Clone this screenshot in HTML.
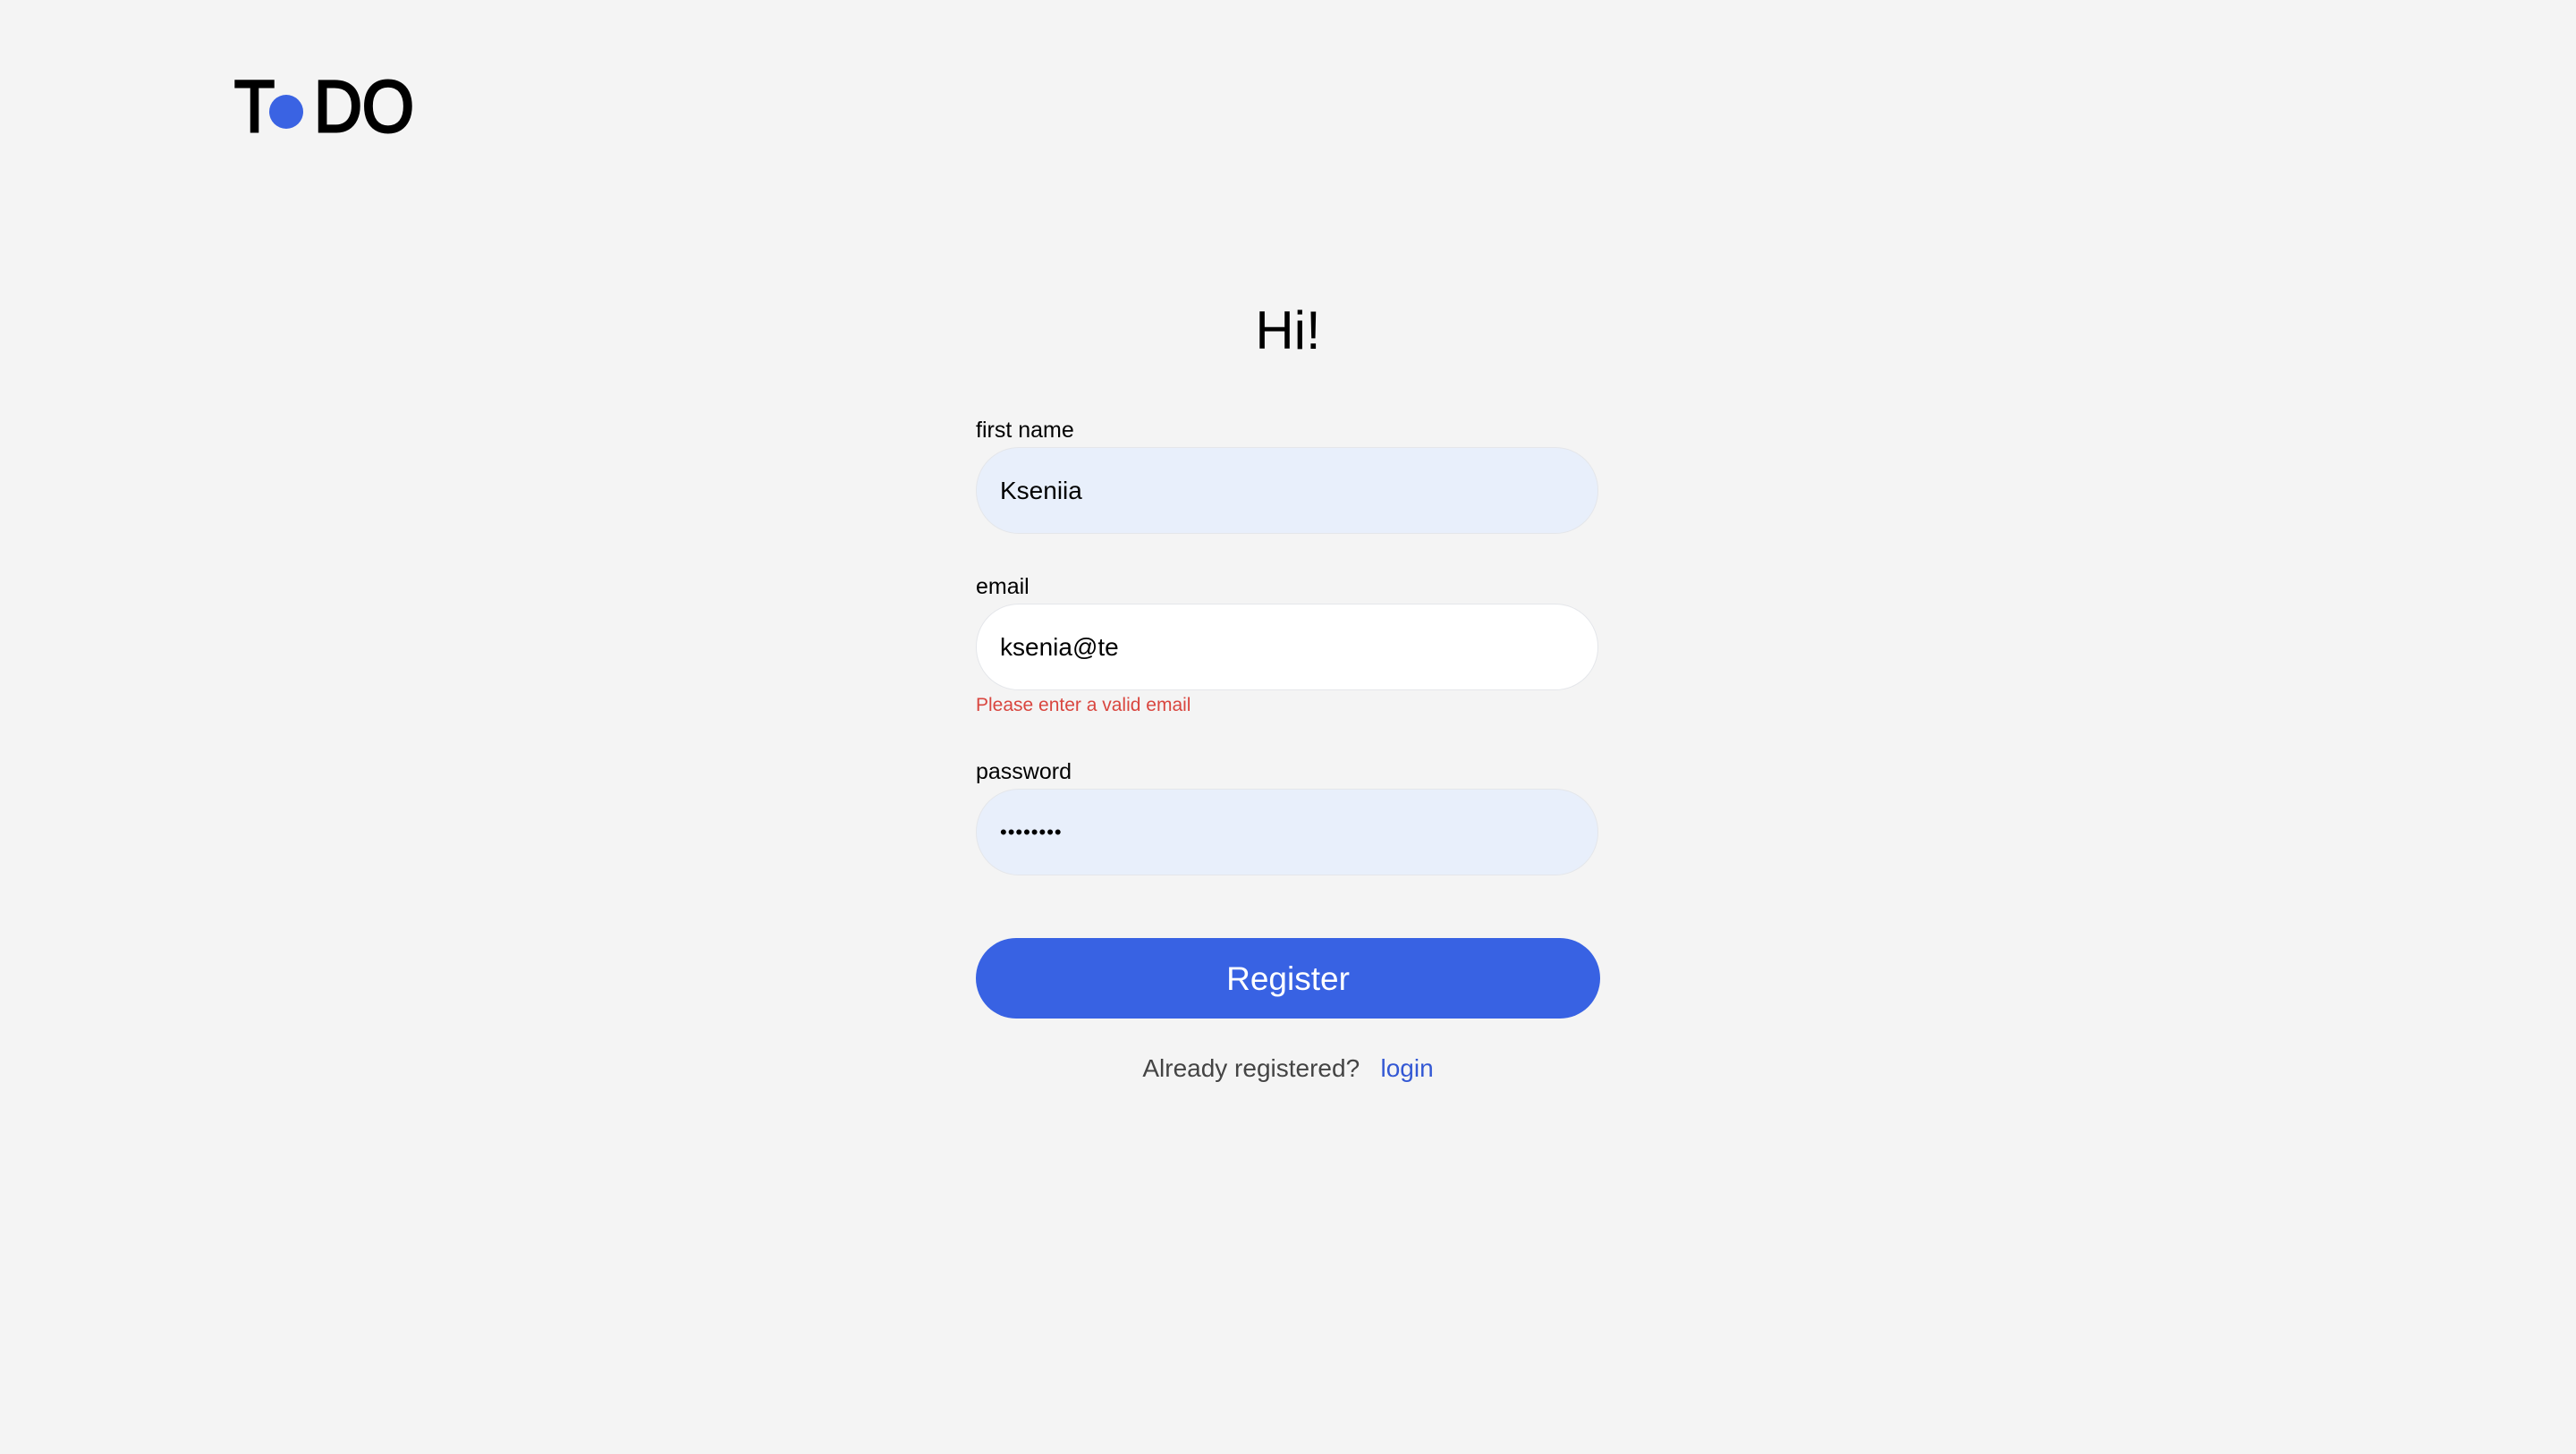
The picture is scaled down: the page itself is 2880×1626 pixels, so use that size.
<!DOCTYPE html>
<html><head><style>
html,body{margin:0;padding:0}
body{width:2880px;height:1626px;background:#f4f4f4;position:relative;overflow:hidden;font-family:"Liberation Sans",sans-serif;color:#000}
.a{position:absolute;white-space:nowrap}
.logo{top:70px;font-size:82px;font-weight:normal;line-height:100px;-webkit-text-stroke:3px #000}
.dot{position:absolute;left:301px;top:106px;width:38px;height:38px;border-radius:50%;background:#3a63e3}
.lbl{left:1091px;font-size:25px;line-height:30px}
.inp{position:absolute;left:1091px;width:694px;height:95px;border:1px solid #e4e6ea;border-radius:48px;box-sizing:content-box}
.inp span{position:absolute;left:26px;top:0;line-height:95px;font-size:28px}
.blue{background:#e8effb}
.white{background:#fff}
</style></head><body>
<div class="a logo" style="left:262px;transform:scaleX(0.9);transform-origin:left">T</div>
<div class="a logo" style="left:351px;transform:scaleX(0.91);transform-origin:left">DO</div>
<div class="dot"></div>
<div class="a" style="left:0;width:2880px;text-align:center;top:332px;font-size:60px;line-height:76px">Hi!</div>

<div class="a lbl" style="top:466px">first name</div>
<div class="inp blue" style="top:500px"><span>Kseniia</span></div>

<div class="a lbl" style="top:641px">email</div>
<div class="inp white" style="top:675px"><span>ksenia@te</span></div>
<div class="a" style="left:1091px;top:776px;font-size:21px;line-height:26px;color:#d9463f">Please enter a valid email</div>

<div class="a lbl" style="top:848px">password</div>
<div class="inp blue" style="top:882px"><span style="font-size:22px;letter-spacing:1px">••••••••</span></div>

<div class="a" style="left:1091px;top:1049px;width:698px;height:90px;border-radius:45px;background:#3862e3;color:#fff;text-align:center;line-height:92px;font-size:37px">Register</div>

<div class="a" style="left:0;width:2880px;text-align:center;top:1177px;font-size:28px;line-height:36px;color:#444">Already registered?&nbsp;&nbsp;&nbsp;<span style="color:#3358d4">login</span></div>
</body></html>
